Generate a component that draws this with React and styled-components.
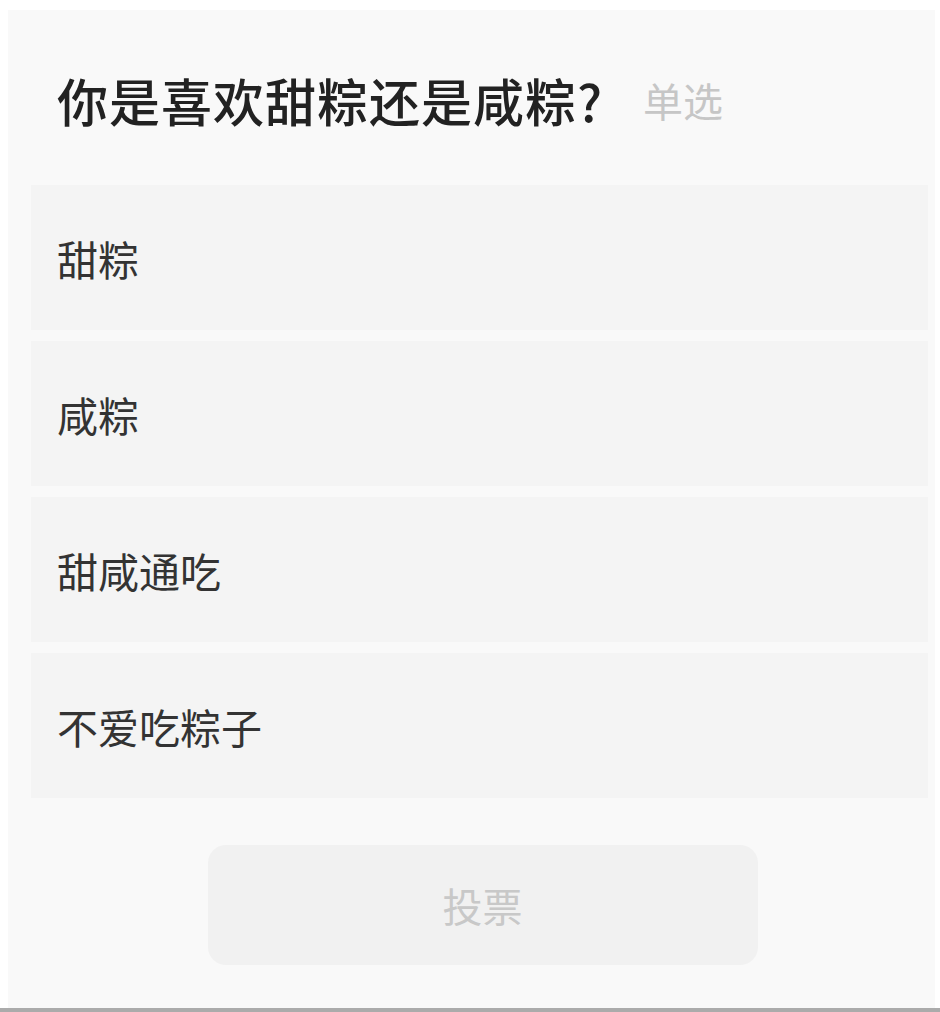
import React from 'react';
import styled, { createGlobalStyle } from 'styled-components';

const GlobalStyle = createGlobalStyle`
  html, body {
    margin: 0;
    padding: 0;
    background: #ffffff;
    font-family: "Noto Sans CJK SC", "Noto Sans", sans-serif;
  }
`;

const Page = styled.div`
  border-bottom: 4px solid #ababab;
  padding: 10px 5px 0 8px;
  height: 998px;
  display: flex;
`;

const Card = styled.div`
  flex: 1;
  background: #f9f9f9;
  padding: 60px 7px 0 23px;
  display: flex;
  flex-direction: column;
`;

const TitleRow = styled.div`
  display: flex;
  align-items: center;
  height: 60px;
  padding-left: 26px;
`;

const Title = styled.h2`
  margin: 0;
  font-size: 51px;
  font-weight: 500;
  color: #222222;
  letter-spacing: 1px;
`;

const Hint = styled.span`
  margin-left: 40px;
  font-size: 40px;
  color: #c6c6c6;
`;

const OptionList = styled.div`
  margin-top: 55px;
  display: flex;
  flex-direction: column;
  gap: 11px;
`;

const Option = styled.div`
  height: 145px;
  background: #f4f4f4;
  display: flex;
  align-items: center;
  padding-left: 26px;
  font-size: 41px;
  color: #333333;
`;

const ButtonRow = styled.div`
  display: flex;
  justify-content: center;
  margin-top: 47px;
  padding-left: 6px;
`;

const VoteButton = styled.button`
  width: 550px;
  height: 120px;
  border: none;
  border-radius: 18px;
  background: #f1f1f1;
  color: #c8c8c8;
  font-family: inherit;
  font-size: 40px;
  cursor: not-allowed;
`;

const options = ['甜粽', '咸粽', '甜咸通吃', '不爱吃粽子'];

const App = () => {
  return (
    <Page>
      <GlobalStyle />
      <Card>
        <TitleRow>
          <Title>你是喜欢甜粽还是咸粽?</Title>
          <Hint>单选</Hint>
        </TitleRow>
        <OptionList>
          {options.map((opt) => (
            <Option key={opt}>{opt}</Option>
          ))}
        </OptionList>
        <ButtonRow>
          <VoteButton disabled>投票</VoteButton>
        </ButtonRow>
      </Card>
    </Page>
  );
};

export default App;
